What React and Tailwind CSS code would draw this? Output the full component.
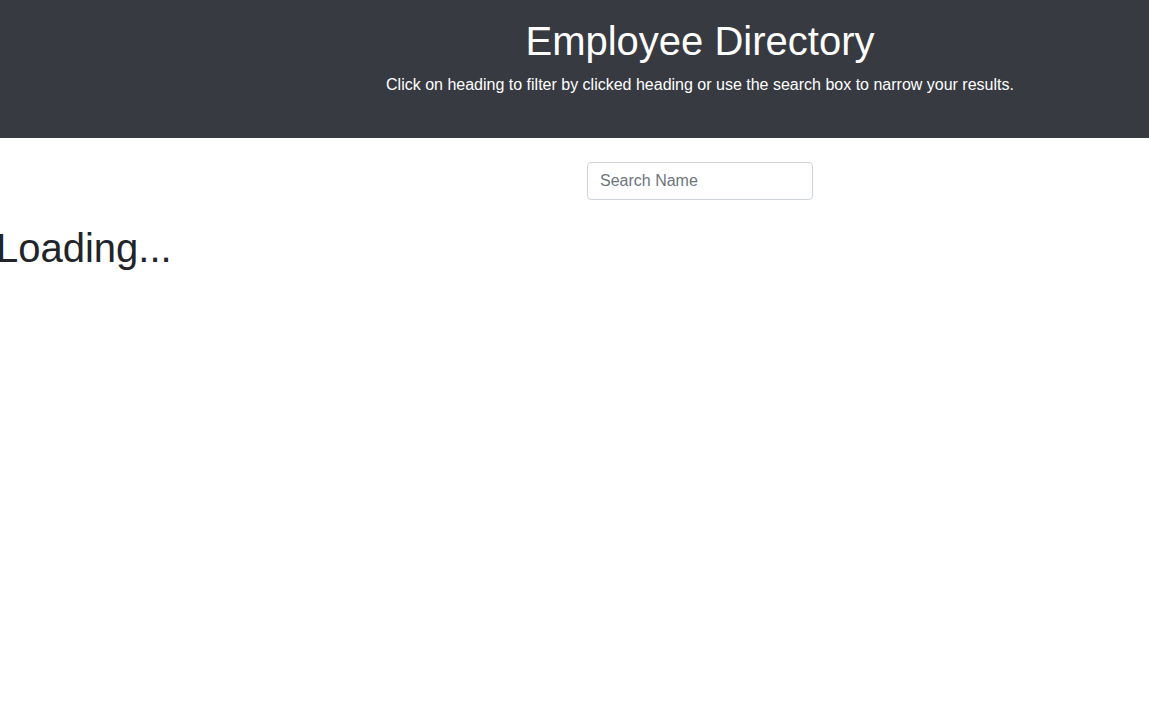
import React from 'react';

const App = () => {
  return (
    <div className="min-h-screen w-full overflow-hidden bg-white" style={{ fontFamily: '"Liberation Sans", Arial, sans-serif' }}>
      <div className="w-[1400px]">
        {/* Header */}
        <header className="h-[138px] bg-[#373a41] text-white text-center pt-[17px]">
          <h1 className="text-[40px] leading-[1.2] font-normal">Employee Directory</h1>
          <p className="text-base leading-6 mt-[8px]">
            Click on heading to filter by clicked heading or use the search box to narrow your results.
          </p>
        </header>

        {/* Search */}
        <div className="flex justify-center pt-[24px]">
          <input
            type="text"
            placeholder="Search Name"
            className="w-[226px] h-[38px] px-3 text-base text-[#495057] placeholder:text-[#6c757d] border border-[#ced4da] rounded bg-white outline-none"
          />
        </div>

        {/* Content */}
        <h1 className="text-[40px] leading-[1.2] font-normal text-[#212529] mt-[24px] -ml-[4px]">Loading...</h1>
      </div>
    </div>
  );
};

export default App;
